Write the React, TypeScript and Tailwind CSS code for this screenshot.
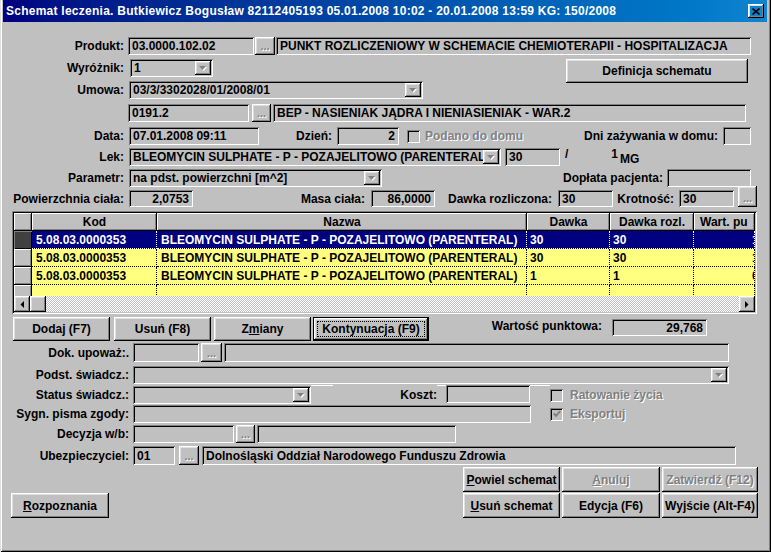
import React from "react";

const SUNKEN = "shadow-[inset_1px_1px_0_#808080,inset_-1px_-1px_0_#ffffff,inset_2px_2px_0_#000000]";
const RAISED = "shadow-[inset_-1px_-1px_0_#000000,inset_1px_1px_0_#ffffff,inset_-2px_-2px_0_#808080,inset_2px_2px_0_#dfdfdf]";
const HEAD = "shadow-[inset_-1px_-1px_0_#000000,inset_1px_1px_0_#ffffff,inset_-2px_-2px_0_#808080]";
const GREY = "text-[#808080] [text-shadow:1px_1px_0_#ffffff]";

type Props = { className?: string; children?: React.ReactNode };

function Field({ className = "", right = false, children }: Props & { right?: boolean }) {
  return (
    <div
      className={`${SUNKEN} shrink-0 flex items-center overflow-hidden whitespace-nowrap ${
        right ? "justify-end pr-[4px]" : "pl-[4px]"
      } ${className}`}
    >
      {children}
    </div>
  );
}

function DownArrow() {
  return (
    <svg width="9" height="6" viewBox="0 0 9 6">
      <polygon points="1,1 8,1 4.5,5" fill="#ffffff" />
      <polygon points="0,0 7,0 3.5,4" fill="#808080" />
    </svg>
  );
}

function Combo({ className = "", children }: Props) {
  return (
    <div className={`${SUNKEN} shrink-0 flex items-center pl-[4px] pr-[2px] whitespace-nowrap ${className}`}>
      <span className="flex-1 overflow-hidden">{children}</span>
      <div className={`${RAISED} w-[16px] h-[14px] shrink-0 flex items-center justify-center pl-[1px] pt-[1px]`}>
        <DownArrow />
      </div>
    </div>
  );
}

function Dots({ className = "" }: Props) {
  return (
    <div
      className={`${RAISED} shrink-0 flex items-end justify-center pb-[3px] text-[11px] leading-none ${GREY} ${className}`}
    >
      ...
    </div>
  );
}

function Btn({ className = "", disabled = false, children }: Props & { disabled?: boolean }) {
  return (
    <div
      className={`${RAISED} shrink-0 flex items-center justify-center whitespace-nowrap ${disabled ? GREY : ""} ${className}`}
    >
      {children}
    </div>
  );
}

function Check({ checked = false, className = "" }: { checked?: boolean; className?: string }) {
  return (
    <div className={`${SUNKEN} w-[13px] h-[13px] shrink-0 flex items-center justify-center ${className}`}>
      {checked && (
        <svg width="8" height="8" viewBox="0 0 8 8">
          <polyline points="0.8,3.5 3,5.8 7.2,1.2" fill="none" stroke="#808080" strokeWidth="2" />
        </svg>
      )}
    </div>
  );
}

function Label({ className = "w-[124px]", children }: Props) {
  return <div className={`${className} shrink-0 text-right whitespace-nowrap`}>{children}</div>;
}

const rows = [
  { kod: "5.08.03.0000353", nazwa: "BLEOMYCIN SULPHATE - P - POZAJELITOWO (PARENTERAL)", dawka: "30", rozl: "30", wart: "1", sel: true },
  { kod: "5.08.03.0000353", nazwa: "BLEOMYCIN SULPHATE - P - POZAJELITOWO (PARENTERAL)", dawka: "30", rozl: "30", wart: "1", sel: false },
  { kod: "5.08.03.0000353", nazwa: "BLEOMYCIN SULPHATE - P - POZAJELITOWO (PARENTERAL)", dawka: "1", rozl: "1", wart: "0", sel: false },
  { kod: "", nazwa: "", dawka: "", rozl: "", wart: "", sel: false },
];

function Grid() {
  return (
    <div className={`${SUNKEN} ml-[12px] mt-[4px] w-[745px] h-[103px] p-[2px] shrink-0 flex flex-col overflow-hidden`}>
      <div className="flex h-[18px] shrink-0">
        <div className={`${HEAD} w-[18px] shrink-0`} />
        <div className={`${HEAD} w-[125px] shrink-0 flex items-center justify-center`}>Kod</div>
        <div className={`${HEAD} w-[370px] shrink-0 flex items-center justify-center`}>Nazwa</div>
        <div className={`${HEAD} w-[83px] shrink-0 flex items-center justify-center`}>Dawka</div>
        <div className={`${HEAD} w-[84px] shrink-0 flex items-center justify-center`}>Dawka rozl.</div>
        <div className={`${HEAD} flex-1 flex items-center pl-[6px] whitespace-nowrap overflow-hidden`}>Wart. pu</div>
      </div>
      <div className="h-[65px] shrink-0 overflow-hidden">
        {rows.map((r, i) => {
          const cell = r.sel
            ? "bg-[#000080] text-white border-r border-b border-dotted border-white"
            : "bg-[#ffff80] border-r border-b border-dotted border-black";
          return (
            <div key={i} className="flex h-[18px]">
              <div
                className={`w-[18px] shrink-0 ${
                  r.sel ? "bg-[#404040] shadow-[inset_1px_1px_0_#808080,inset_-1px_-1px_0_#000000]" : HEAD
                }`}
              />
              <div className={`${cell} w-[125px] shrink-0 pl-[4px] flex items-center whitespace-nowrap`}>{r.kod}</div>
              <div className={`${cell} w-[370px] shrink-0 pl-[4px] flex items-center whitespace-nowrap overflow-hidden`}>
                {r.nazwa}
              </div>
              <div className={`${cell} w-[83px] shrink-0 pl-[3px] flex items-center`}>{r.dawka}</div>
              <div className={`${cell} w-[84px] shrink-0 pl-[3px] flex items-center`}>{r.rozl}</div>
              <div className={`${cell} flex-1 pl-[58px] flex items-center overflow-hidden whitespace-nowrap`}>{r.wart}</div>
            </div>
          );
        })}
      </div>
      <div className="flex h-[16px] shrink-0">
        <div className={`${RAISED} w-[16px] h-[16px] flex items-center justify-center`}>
          <svg width="4" height="7" viewBox="0 0 4 7">
            <polygon points="4,0 4,7 0.5,3.5" fill="#000000" />
          </svg>
        </div>
        <div className={`${RAISED} w-[16px] h-[16px]`} />
        <div className="flex-1 bg-[image:repeating-conic-gradient(#c0c0c0_0_25%,#ffffff_0_50%)] bg-[length:2px_2px]" />
        <div className={`${RAISED} w-[16px] h-[16px] flex items-center justify-center`}>
          <svg width="4" height="7" viewBox="0 0 4 7">
            <polygon points="0,0 0,7 3.5,3.5" fill="#000000" />
          </svg>
        </div>
      </div>
    </div>
  );
}

export default function App() {
  return (
    <div className="w-[771px] h-[552px] bg-[#c0c0c0] overflow-hidden flex flex-col font-['Liberation_Sans',Arial,sans-serif] text-[12px] font-bold leading-[14px] text-black shadow-[inset_1px_0_0_#dfdfdf,inset_-1px_0_0_#000000,inset_0_-1px_0_#000000,inset_2px_0_0_#ffffff,inset_-2px_0_0_#808080,inset_0_-2px_0_#808080]">
      {/* title bar */}
      <div className="h-[22px] ml-[3px] mr-[4px] shrink-0 flex items-center bg-linear-to-r from-[#000080] to-[#1084d0] pl-[3px] pr-[3px]">
        <span className="flex-1 text-white tracking-[0.25px] whitespace-nowrap overflow-hidden">
          Schemat leczenia. Butkiewicz Bogusław 82112405193 05.01.2008 10:02 - 20.01.2008 13:59 KG: 150/2008
        </span>
        <div className={`${RAISED} w-[16px] h-[14px] shrink-0 flex items-center justify-center`}>
          <svg width="8" height="7" viewBox="0 0 8 7">
            <path d="M0.5 0.5 L7.5 6.5 M7.5 0.5 L0.5 6.5" stroke="#000000" strokeWidth="1.6" />
          </svg>
        </div>
      </div>

      {/* Produkt */}
      <div className="flex h-[18px] items-center mt-[15px] shrink-0">
        <Label>Produkt:</Label>
        <Field className="ml-[4px] w-[126px] h-[18px]">03.0000.102.02</Field>
        <Dots className="ml-[1px] w-[20px] h-[18px]" />
        <Field className="ml-[1px] w-[475px] h-[18px]">PUNKT ROZLICZENIOWY W SCHEMACIE CHEMIOTERAPII - HOSPITALIZACJA</Field>
      </div>

      {/* Wyróżnik */}
      <div className="flex h-[18px] items-center mt-[4px] shrink-0">
        <Label>Wyróżnik:</Label>
        <Combo className="ml-[6px] w-[83px] h-[18px]">1</Combo>
        <Btn className="ml-[353px] w-[182px] h-[24px] self-start">Definicja schematu</Btn>
      </div>

      {/* Umowa */}
      <div className="flex h-[18px] items-center mt-[4px] shrink-0">
        <Label>Umowa:</Label>
        <Combo className="ml-[5px] w-[294px] h-[18px]">03/3/3302028/01/2008/01</Combo>
      </div>

      {/* 0191.2 */}
      <div className="flex h-[18px] items-center mt-[5px] shrink-0">
        <Field className="ml-[128px] w-[121px] h-[18px]">0191.2</Field>
        <Dots className="ml-[3px] w-[19px] h-[18px]" />
        <Field className="ml-[2px] w-[473px] h-[18px]">BEP - NASIENIAK JĄDRA I NIENIASIENIAK - WAR.2</Field>
      </div>

      {/* Data */}
      <div className="flex h-[18px] items-center mt-[5px] shrink-0">
        <Label>Data:</Label>
        <Field className="ml-[5px] w-[130px] h-[18px]">07.01.2008 09:11</Field>
        <Label className="w-[73px]">Dzień:</Label>
        <Field right className="ml-[5px] w-[62px] h-[18px]">2</Field>
        <Check className="ml-[8px]" />
        <div className={`ml-[5px] w-[150px] shrink-0 whitespace-nowrap ${GREY}`}>Podano do domu</div>
        <Label className="w-[143px]">Dni zażywania w domu:</Label>
        <Field className="ml-[5px] w-[28px] h-[18px]" />
      </div>

      {/* Lek */}
      <div className="flex h-[18px] items-center mt-[3px] shrink-0">
        <Label>Lek:</Label>
        <Combo className="ml-[5px] w-[372px] h-[18px]">BLEOMYCIN SULPHATE - P - POZAJELITOWO (PARENTERAL)</Combo>
        <Field className="ml-[4px] w-[55px] h-[18px]">30</Field>
        <span className="ml-[5px] -translate-y-[3px]">/</span>
        <span className="ml-[43px] -translate-y-[3px]">1</span>
        <span className="ml-[2px] translate-y-[2px]">MG</span>
      </div>

      {/* Parametr */}
      <div className="flex h-[18px] items-center mt-[3px] shrink-0">
        <Label>Parametr:</Label>
        <Combo className="ml-[5px] w-[253px] h-[18px]">na pdst. powierzchni [m^2]</Combo>
        <Label className="w-[281px]">Dopłata pacjenta:</Label>
        <Field className="ml-[4px] w-[84px] h-[18px]" />
      </div>

      {/* Powierzchnia */}
      <div className="flex h-[17px] items-center mt-[3px] shrink-0">
        <Label>Powierzchnia ciała:</Label>
        <Field right className="ml-[5px] w-[64px] h-[17px]">2,0753</Field>
        <Label className="w-[172px]">Masa ciała:</Label>
        <Field right className="ml-[6px] w-[64px] h-[17px]">86,0000</Field>
        <Label className="w-[117px]">Dawka rozliczona:</Label>
        <Field className="ml-[6px] w-[55px] h-[17px]">30</Field>
        <Label className="w-[61px]">Krotność:</Label>
        <Field className="ml-[5px] w-[55px] h-[17px]">30</Field>
        <Dots className="ml-[4px] w-[19px] h-[21px] self-end" />
      </div>

      <Grid />

      {/* grid buttons */}
      <div className="flex h-[24px] mt-[3px] shrink-0">
        <Btn className="ml-[13px] w-[97px] h-[24px]">Dodaj (F7)</Btn>
        <Btn className="ml-[4px] w-[97px] h-[24px]">Usuń (F8)</Btn>
        <Btn className="ml-[3px] w-[97px] h-[24px]">
          Z<u className="underline">m</u>iany
        </Btn>
        <div className="ml-[2px] w-[116px] h-[24px] border border-black shrink-0">
          <div className={`${RAISED} w-full h-full p-[3px]`}>
            <div className="w-full h-full border border-dotted border-black flex items-center justify-center whitespace-nowrap">
              Kontynuacja (F9)
            </div>
          </div>
        </div>
        <Label className="w-[173px] self-start mt-[2px]">Wartość punktowa:</Label>
        <Field right className="ml-[10px] w-[95px] h-[17px] self-start mt-[2px]">29,768</Field>
      </div>

      {/* Dok. upoważ */}
      <div className="flex h-[19px] items-center mt-[2px] shrink-0">
        <Label className="w-[129px]">Dok. upoważ:.</Label>
        <Field className="ml-[4px] w-[66px] h-[19px]" />
        <Dots className="ml-[2px] w-[21px] h-[19px]" />
        <Field className="ml-[2px] w-[505px] h-[19px]" />
      </div>

      {/* Podst. */}
      <div className="flex h-[18px] items-center mt-[4px] shrink-0">
        <Label className="w-[129px]">Podst. świadcz.:</Label>
        <Combo className="ml-[4px] w-[596px] h-[18px]" />
      </div>

      {/* Status */}
      <div className="flex h-[18px] items-center mt-[2px] shrink-0">
        <Label className="w-[129px]">Status świadcz.:</Label>
        <Combo className="ml-[4px] w-[178px] h-[18px]" />
        <div className="w-[22px] h-px bg-white self-start -mt-[1px] shrink-0" />
        <Label className="w-[104px]">Koszt:</Label>
        <div className="w-[9px] h-px bg-white self-start -mt-[1px] shrink-0" />
        <Field className="w-[84px] h-[18px] self-start -mt-[1px]" />
        <div className="w-[20px] h-px bg-white self-start -mt-[1px] shrink-0" />
        <Check />
        <div className={`ml-[7px] whitespace-nowrap ${GREY}`}>Ratowanie życia</div>
      </div>

      {/* Sygn */}
      <div className="flex h-[18px] items-center mt-[1px] shrink-0">
        <Label className="w-[129px]">Sygn. pisma zgody:</Label>
        <Field className="ml-[4px] w-[398px] h-[18px]" />
        <Check checked className="ml-[19px]" />
        <div className={`ml-[7px] whitespace-nowrap ${GREY}`}>Eksportuj</div>
      </div>

      {/* Decyzja */}
      <div className="flex h-[18px] items-center mt-[2px] shrink-0">
        <Label className="w-[129px]">Decyzja w/b:</Label>
        <Field className="ml-[4px] w-[101px] h-[18px]" />
        <Dots className="ml-[2px] w-[19px] h-[18px]" />
        <Field className="ml-[2px] w-[199px] h-[18px]" />
      </div>

      {/* Ubezpieczyciel */}
      <div className="flex h-[19px] items-center mt-[3px] shrink-0">
        <Label className="w-[129px]">Ubezpieczyciel:</Label>
        <Field className="ml-[4px] w-[42px] h-[19px]">01</Field>
        <Dots className="ml-[4px] w-[20px] h-[19px]" />
        <Field className="ml-[3px] w-[534px] h-[19px]">Dolnośląski Oddział Narodowego Funduszu Zdrowia</Field>
      </div>

      {/* bottom buttons */}
      <div className="flex h-[25px] mt-[2px] shrink-0">
        <Btn className="ml-[463px] w-[97px] h-[25px]">
          <u className="underline">P</u>owiel schemat
        </Btn>
        <Btn disabled className="ml-[2px] w-[98px] h-[25px]">
          <u className="underline">A</u>nuluj
        </Btn>
        <Btn disabled className="ml-[2px] w-[96px] h-[25px]">Zatwierdź (F12)</Btn>
      </div>
      <div className="flex h-[25px] mt-[1px] shrink-0">
        <Btn className="ml-[11px] w-[98px] h-[25px]">
          <u className="underline">R</u>ozpoznania
        </Btn>
        <Btn className="ml-[354px] w-[97px] h-[25px]">
          <u className="underline">U</u>suń schemat
        </Btn>
        <Btn className="ml-[2px] w-[98px] h-[25px]">Edycja (F6)</Btn>
        <Btn className="ml-[2px] w-[96px] h-[25px]">Wyjście (Alt-F4)</Btn>
      </div>
    </div>
  );
}
